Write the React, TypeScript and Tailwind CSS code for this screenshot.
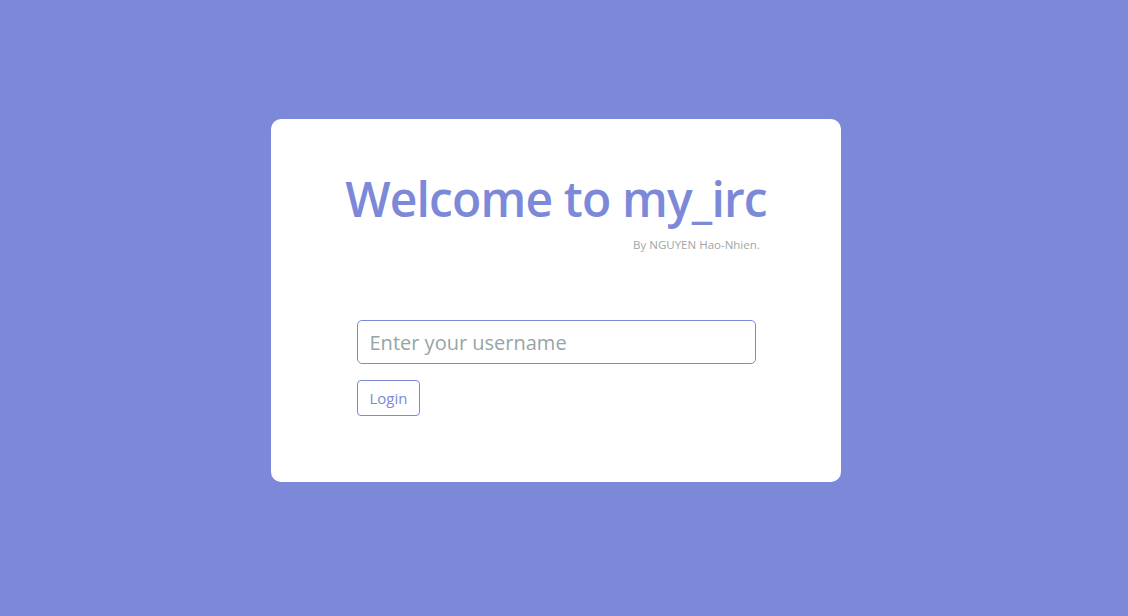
import React from "react";

export default function App() {
  return (
    <div className="h-[616px] w-full bg-[#7b89d8] pt-[119px] pl-[271px]" style={{ fontFamily: '"Open Sans", "Noto Sans", sans-serif' }}>
      <div className="w-[570px] h-[363px] rounded-[10px] bg-white flex flex-col items-center">
        <div className="mt-[48px] flex flex-col items-end">
          <h1 className="text-[48px] leading-[64px] font-semibold text-[#7b89d8] tracking-[-0.85px]">Welcome to my_irc</h1>
          <p className="mt-[7px] mr-[7px] text-[11.5px] leading-[14px] text-[#a0a6a6]">By NGUYEN Hao-Nhien.</p>
        </div>
        <div className="mt-[68px] w-[399px] flex flex-col items-start">
          <input
            type="text"
            placeholder="Enter your username"
            className="w-[399px] h-[44px] rounded-[5px] border border-[#7b89d8] px-[12px] text-[20px] text-[#555] placeholder:text-[#95a5a6] outline-none"
          />
          <button className="mt-[16px] h-[36px] px-[12px] rounded-[4px] border border-[#7b89d8] text-[15px] text-[#7b89d8] bg-white">Login</button>
        </div>
      </div>
    </div>
  );
}
